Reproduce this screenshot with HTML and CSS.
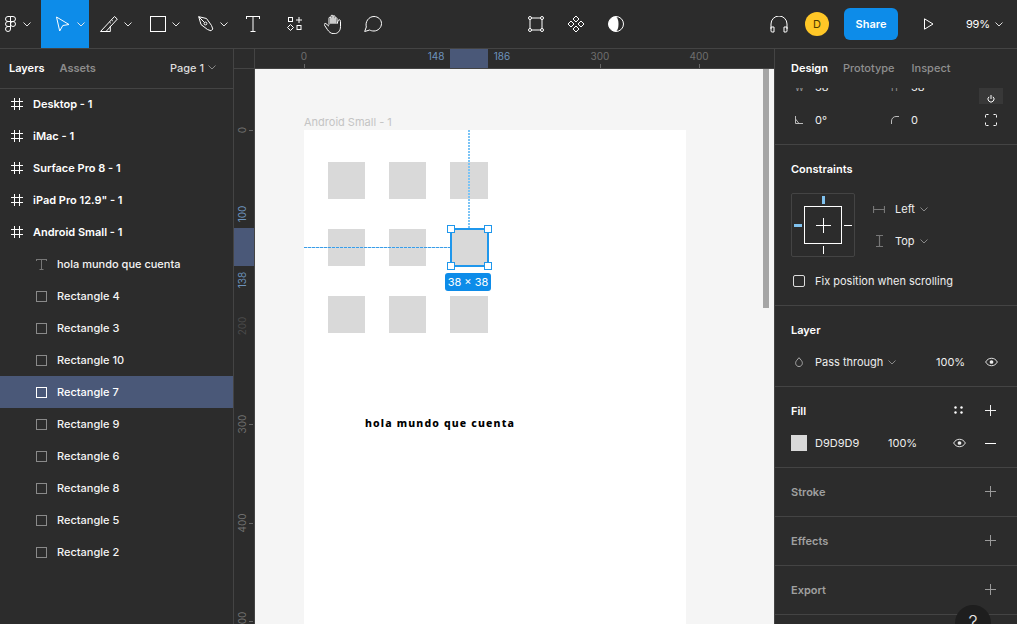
FILE: index.html
```html
<!DOCTYPE html>
<html lang="en">
<head>
<meta charset="utf-8">
<title>Figma</title>
<link rel="stylesheet" href="styles.css">
</head>
<body>
<svg class="sprite" aria-hidden="true">
  <symbol id="chev" viewBox="0 0 8 5"><path d="M.5.500 4 4 7.500.500" fill="none" stroke="currentColor"/></symbol>
  <symbol id="frame" viewBox="0 0 12 12"><path d="M3.500 0v12M8.500 0v12M0 3.500h12M0 8.500h12" fill="none" stroke="currentColor"/></symbol>
  <symbol id="rect" viewBox="0 0 11 11"><rect x=".5" y=".5" width="10" height="10" fill="none" stroke="currentColor"/></symbol>
  <symbol id="plus" viewBox="0 0 11 11"><path d="M5.500 0v11M0 5.500h11" fill="none" stroke="currentColor" vector-effect="non-scaling-stroke"/></symbol>
  <symbol id="eye" viewBox="0 0 14 10"><path d="M.7 5C2.200 2.300 4.400 1 7 1s4.800 1.300 6.300 4C11.800 7.700 9.600 9 7 9S2.200 7.700.7 5Z" fill="none" stroke="currentColor"/><circle cx="7" cy="5" r="2" fill="currentColor"/></symbol>
</svg>

<div class="app">
  <header class="topbar">
    <div class="tool tool-logo">
      <svg class="ico-logo" viewBox="0 0 11 16"><g fill="none" stroke="#fff"><path d="M5.500.5H3a2.500 2.500 0 0 0 0 5h2.500ZM5.500.5H8a2.500 2.500 0 0 1 0 5H5.500ZM5.500 5.500H3a2.500 2.500 0 0 0 0 5h2.500Z"/><circle cx="8" cy="8" r="2.500"/><path d="M3 10.500h2.500V13A2.500 2.500 0 1 1 3 10.500Z"/></g></svg>
      <svg class="chev"><use href="#chev"/></svg>
    </div>
    <div class="tool tool-active">
      <svg class="ico-16" viewBox="0 0 16 16"><path d="M1.500 1 14 8.500 7.800 9.500 4.700 15Z" fill="none" stroke="#fff"/></svg>
      <svg class="chev"><use href="#chev"/></svg>
    </div>
    <div class="tool tool-line">
      <svg class="ico-18" viewBox="0 0 18 16"><path d="M.5 15.500h9.800V9.800M.5 15.500 14.500.5l2.800 2.600L6 15.500M11.500 3.800l1.300 1.200M9.500 6l1.300 1.200" fill="none" stroke="#fff"/></svg>
      <svg class="chev"><use href="#chev"/></svg>
    </div>
    <div class="tool">
      <svg class="ico-16" viewBox="0 0 16 16"><rect x=".5" y=".5" width="15" height="15" fill="none" stroke="#fff"/></svg>
      <svg class="chev"><use href="#chev"/></svg>
    </div>
    <div class="tool">
      <svg class="ico-16" viewBox="0 0 16 16"><g fill="none" stroke="#fff"><path d="M.7.700 8.500 2.500 13.500 9.500 14.800 13 13 14.800 9.500 13.500 3 8.500Z"/><path d="M.7.700 6.500 6.500"/><circle cx="7.500" cy="7.500" r="1.400"/></g></svg>
      <svg class="chev"><use href="#chev"/></svg>
    </div>
    <div class="tool tool-t">
      <svg class="ico-t" viewBox="0 0 14 16"><path d="M0 .5h14M7 .5v15M4.500 15.500h5M.5 0v3M13.500 0v3" fill="none" stroke="#fff"/></svg>
    </div>
    <div class="tool tool-shapes">
      <svg class="ico-16" viewBox="0 0 16 16"><g fill="none" stroke="#fff"><rect x="1.500" y="1.500" width="4" height="4"/><path d="M12 1v6M9 4h6"/><path d="M3.500 8.500 6.500 11.500 3.500 14.500.5 11.500Z"/><rect x="10" y="9.500" width="4" height="4"/></g></svg>
    </div>
    <div class="tool tool-hand">
      <svg class="ico-hand" viewBox="0 0 18 20"><path d="M5.500 11V4.500a1 1 0 0 1 2 0V10 2.500a1 1 0 0 1 2 0V10 3a1 1 0 0 1 2 0v7-5a1 1 0 0 1 2 0v5c.5 0 .8-4 2-4 1 0 1.500.5 1.500 2v5c0 4-2.500 7-6.500 7-3.500 0-5-2-6.500-4L1 11.500c-.8-1 .3-2.300 1.500-1.500l3 2.500" fill="none" stroke="#fff" transform="translate(-.5 -.3)"/></svg>
    </div>
    <div class="tool tool-comment">
      <svg class="ico-18" viewBox="0 0 18 16"><path d="M.7 15.500 2.300 11C1 6 4.500.5 10 .5c4 0 7.500 3 7.500 7S14 15 10 15c-2 0-3.200-.4-4.300-1Z" fill="none" stroke="#fff"/></svg>
    </div>

    <div class="center-tools">
      <svg class="ico-16" viewBox="0 0 16 16"><g fill="none" stroke="#fff"><path d="M3 2h10M3 14h10M2 3v10M14 3v10"/><circle cx="2" cy="2" r="1.500"/><circle cx="14" cy="2" r="1.500"/><circle cx="2" cy="14" r="1.500"/><circle cx="14" cy="14" r="1.500"/></g></svg>
      <svg class="ico-18" viewBox="0 0 18 18"><g fill="none" stroke="#fff"><path d="M9 1 12 4 9 7 6 4Z"/><path d="M4 6 7 9 4 12 1 9Z"/><path d="M14 6 17 9 14 12 11 9Z"/><path d="M9 11 12 14 9 17 6 14Z"/></g></svg>
      <svg class="ico-16" viewBox="0 0 16 16"><circle cx="8" cy="8" r="7.500" fill="none" stroke="#fff"/><path d="M8 .5a7.500 7.500 0 0 0 0 15c2-2 2.500-4.500 2.500-7.500S10 2.500 8 .5Z" fill="#fff"/></svg>
    </div>

    <div class="right-tools">
      <svg class="ico-head" viewBox="0 0 18 17"><path d="M1 13V8a8 8 0 0 1 16 0v5M1 11h3v5H2a1 1 0 0 1-1-1ZM17 11h-3v5h2a1 1 0 0 0 1-1Z" fill="none" stroke="#fff"/></svg>
      <div class="avatar">D</div>
      <div class="share">Share</div>
      <svg class="ico-play" viewBox="0 0 10 12"><path d="M.5.800 9 6 .5 11.200Z" fill="none" stroke="#fff"/></svg>
      <div class="zoom-level">99%<svg class="chev chev-zoom"><use href="#chev"/></svg></div>
    </div>
  </header>

  <div class="main">
    <aside class="layers">
      <div class="layers-head">
        <span class="tab-on">Layers</span>
        <span class="tab-off">Assets</span>
        <span class="page">Page 1<svg class="chev chev-dim"><use href="#chev"/></svg></span>
      </div>
      <ul class="layer-list">
        <li class="row row-frame"><svg class="ico-frame"><use href="#frame"/></svg>Desktop - 1</li>
        <li class="row row-frame"><svg class="ico-frame"><use href="#frame"/></svg>iMac - 1</li>
        <li class="row row-frame"><svg class="ico-frame"><use href="#frame"/></svg>Surface Pro 8 - 1</li>
        <li class="row row-frame"><svg class="ico-frame"><use href="#frame"/></svg>iPad Pro 12.9" - 1</li>
        <li class="row row-frame"><svg class="ico-frame"><use href="#frame"/></svg>Android Small - 1</li>
        <li class="row row-child"><svg class="ico-rect ico-text" viewBox="0 0 11 11"><path d="M0 .5h11M5.500.5v10M3.500 10.500h4M.5 0v2M10.500 0v2" fill="none" stroke="currentColor"/></svg>hola mundo que cuenta</li>
        <li class="row row-child"><svg class="ico-rect"><use href="#rect"/></svg>Rectangle 4</li>
        <li class="row row-child"><svg class="ico-rect"><use href="#rect"/></svg>Rectangle 3</li>
        <li class="row row-child"><svg class="ico-rect"><use href="#rect"/></svg>Rectangle 10</li>
        <li class="row row-child row-selected"><svg class="ico-rect"><use href="#rect"/></svg>Rectangle 7</li>
        <li class="row row-child"><svg class="ico-rect"><use href="#rect"/></svg>Rectangle 9</li>
        <li class="row row-child"><svg class="ico-rect"><use href="#rect"/></svg>Rectangle 6</li>
        <li class="row row-child"><svg class="ico-rect"><use href="#rect"/></svg>Rectangle 8</li>
        <li class="row row-child"><svg class="ico-rect"><use href="#rect"/></svg>Rectangle 5</li>
        <li class="row row-child"><svg class="ico-rect"><use href="#rect"/></svg>Rectangle 2</li>
      </ul>
    </aside>

    <section class="stage">
      <div class="hruler-row">
        <div class="corner"></div>
        <div class="hruler">
          <span class="hl-h"></span>
          <span class="rn rn-h x0">0</span><i class="tick-h tx0"></i>
          <span class="rn rn-h rn-blue x148">148</span>
          <span class="rn rn-h rn-blue x186">186</span>
          <span class="rn rn-h x300">300</span><i class="tick-h tx300"></i>
          <span class="rn rn-h x400">400</span><i class="tick-h tx400"></i>
        </div>
      </div>
      <div class="stage-body">
        <div class="vruler">
          <span class="hl-v"></span>
          <span class="rn rn-v y0">0</span><i class="tick-v ty0"></i>
          <span class="rn rn-v rn-blue y100">100</span>
          <span class="rn rn-v rn-blue y138">138</span>
          <span class="rn rn-v rn-faint y200">200</span>
          <span class="rn rn-v y300">300</span><i class="tick-v ty300"></i>
          <span class="rn rn-v y400">400</span><i class="tick-v ty400"></i>
          <span class="rn rn-v y500">500</span><i class="tick-v ty500"></i>
        </div>
        <div class="canvas">
          <div class="frame-label">Android Small - 1</div>
          <div class="art-frame">
            <div class="grid">
              <div class="cell"></div><div class="cell"></div><div class="cell"></div>
              <div class="cell"></div><div class="cell"></div><div class="cell"></div>
              <div class="cell"></div><div class="cell"></div><div class="cell"></div>
            </div>
            <div class="art-text">hola mundo que cuenta</div>
            <div class="guide-v"></div>
            <div class="guide-h"></div>
            <div class="selection">
              <i class="handle h-tl"></i><i class="handle h-tr"></i><i class="handle h-bl"></i><i class="handle h-br"></i>
            </div>
            <div class="size-tag">38 × 38</div>
          </div>
          <div class="scrollbar"></div>
        </div>
      </div>
    </section>

    <aside class="props">
      <div class="props-tabs">
        <span class="ptab-on">Design</span>
        <span class="ptab-off">Prototype</span>
        <span class="ptab-off">Inspect</span>
      </div>
      <section class="sec sec-geo">
        <div class="clip-row">
          <div class="geo-row geo-row-clipped">
            <span class="geo-ico">W</span><span class="geo-val">38</span>
            <span class="geo-ico geo-col2">H</span><span class="geo-val">38</span>
            <span class="power"><svg class="ico-power" viewBox="0 0 8 8"><path d="M2 1.800a3 3 0 1 0 4 0M4 0v4" fill="none" stroke="#fff"/></svg></span>
          </div>
        </div>
        <div class="geo-row">
          <svg class="geo-svg" viewBox="0 0 8 8"><path d="M.5 0v7.500H8M.5 3 4 7.500" fill="none" stroke="#bbb"/></svg><span class="geo-val">0°</span>
          <svg class="geo-svg geo-col2" viewBox="0 0 8 8"><path d="M.5 8V5A4.500 4.500 0 0 1 5 .5h3" fill="none" stroke="#bbb"/></svg><span class="geo-val">0</span>
          <svg class="ico-corners" viewBox="0 0 12 12"><path d="M.5 3.500v-2a1 1 0 0 1 1-1h2M8.500.5h2a1 1 0 0 1 1 1v2M11.500 8.500v2a1 1 0 0 1-1 1h-2M3.500 11.500h-2a1 1 0 0 1-1-1v-2" fill="none" stroke="#fff"/></svg>
        </div>
      </section>

      <section class="sec sec-constraints">
        <h3 class="sec-title">Constraints</h3>
        <div class="constraint-body">
          <div class="cwidget">
            <div class="cbox"><svg class="cplus"><use href="#plus"/></svg></div>
            <i class="cm cm-top"></i><i class="cm cm-left"></i><i class="cm cm-right"></i><i class="cm cm-bottom"></i>
          </div>
          <div class="cselects">
            <div class="csel"><svg class="csel-ico" viewBox="0 0 12 7"><path d="M.5 0v7M11.500 0v7M.5 3.500h11" fill="none" stroke="#777" stroke-width="1.200"/></svg>Left<svg class="chev chev-dim"><use href="#chev"/></svg></div>
            <div class="csel"><svg class="csel-ico csel-ico-v" viewBox="0 0 7 12"><path d="M0 .5h7M0 11.500h7M3.500.5v11" fill="none" stroke="#777" stroke-width="1.200"/></svg>Top<svg class="chev chev-dim"><use href="#chev"/></svg></div>
          </div>
        </div>
        <label class="fix-row"><span class="checkbox"></span>Fix position when scrolling</label>
      </section>

      <section class="sec sec-layer">
        <h3 class="sec-title">Layer</h3>
        <div class="prop-row">
          <svg class="ico-drop" viewBox="0 0 8 10"><path d="M4 .7 6.300 3.400C8.600 6.200 6.800 9.500 4 9.500S-.6 6.200 1.700 3.400Z" fill="none" stroke="#aaa"/></svg>
          <span class="blend">Pass through<svg class="chev chev-dim"><use href="#chev"/></svg></span>
          <span class="pct-layer">100%</span>
          <svg class="ico-eye"><use href="#eye"/></svg>
        </div>
      </section>

      <section class="sec sec-fill">
        <div class="sec-head">
          <h3 class="sec-title">Fill</h3>
          <svg class="ico-dots" viewBox="0 0 9 8"><g fill="#fff"><circle cx="1.500" cy="1.500" r="1.200"/><circle cx="7.500" cy="1.500" r="1.200"/><circle cx="1.500" cy="6.500" r="1.200"/><circle cx="7.500" cy="6.500" r="1.200"/></g></svg>
          <svg class="ico-plus"><use href="#plus"/></svg>
        </div>
        <div class="prop-row prop-row-fill">
          <span class="swatch"></span>
          <span class="hex">D9D9D9</span>
          <span class="pct-fill">100%</span>
          <svg class="ico-eye"><use href="#eye"/></svg>
          <svg class="ico-minus" viewBox="0 0 11 1"><path d="M0 .5h11" stroke="#fff"/></svg>
        </div>
      </section>

      <section class="sec sec-empty"><h3 class="sec-title sec-title-dim">Stroke</h3><svg class="ico-plus ico-plus-dim"><use href="#plus"/></svg></section>
      <section class="sec sec-empty"><h3 class="sec-title sec-title-dim">Effects</h3><svg class="ico-plus ico-plus-dim"><use href="#plus"/></svg></section>
      <section class="sec sec-empty"><h3 class="sec-title sec-title-dim">Export</h3><svg class="ico-plus ico-plus-dim"><use href="#plus"/></svg></section>
      <div class="help"><span>?</span></div>
    </aside>
  </div>
</div>
</body>
</html>
```

FILE: styles.css
```css
* { box-sizing: border-box; }
html, body { margin: 0; height: 100%; overflow: hidden; }
body { background: #2c2c2c; color: #fff; font-family: Inter, "Liberation Sans", sans-serif; font-size: 11px; }
svg { display: block; flex: none; }
.sprite { position: absolute; width: 0; height: 0; }
.app { width: 1017px; height: 624px; display: flex; flex-direction: column; overflow: hidden; }

/* top bar */
.topbar { height: 49px; flex: none; display: flex; align-items: center; background: #2c2c2c; border-bottom: 1px solid #444; }
.tool { height: 48px; width: 48px; padding-left: 13px; display: flex; align-items: center; gap: 6px; color: #fff; }
.tool-logo { width: 41px; padding-left: 5px; gap: 7px; }
.tool-active { background: #0d8ce9; padding-left: 14px; gap: 6px; }
.tool-line { padding-left: 11px; }
.tool-t { width: 42px; }
.tool-shapes { width: 37px; padding-left: 12px; }
.tool-hand { width: 40px; padding-left: 12px; }
.tool-comment { width: 30px; padding-left: 12px; }
.chev { width: 8px; height: 5px; color: #e6e6e6; }
.chev-dim { color: #888; }
.ico-logo { width: 11px; height: 16px; }
.ico-16 { width: 16px; height: 16px; }
.ico-18 { width: 18px; height: 16px; }
.ico-t { width: 14px; height: 16px; }
.ico-hand { width: 18px; height: 20px; }
.center-tools { margin-left: 146px; display: flex; align-items: center; gap: 23px; }
.center-tools .ico-18 { height: 18px; }
.right-tools { margin-left: auto; display: flex; align-items: center; }
.ico-head { width: 18px; height: 17px; margin-right: 17px; }
.avatar { width: 24px; height: 24px; border-radius: 50%; background: #ffc727; color: #4d3c00; font-size: 11px; display: flex; align-items: center; justify-content: center; margin-right: 15px; }
.share { width: 54px; height: 32px; border-radius: 6px; background: #0d8ce9; font-weight: 600; display: flex; align-items: center; justify-content: center; margin-right: 26px; }
.ico-play { width: 10px; height: 12px; margin-right: 32px; }
.zoom-level { display: flex; align-items: center; gap: 5px; width: 51px; letter-spacing: -.2px; }
.chev-zoom { color: #ddd; }

/* main columns */
.main { flex: 1; display: flex; min-height: 0; position: relative; }

/* layers */
.layers { width: 234px; flex: none; border-right: 1px solid #444; }
.layers-head { height: 40px; display: flex; align-items: center; padding: 0 16px 2px 9px; border-bottom: 1px solid #444; font-weight: 600; }
.tab-on { color: #fff; }
.tab-off { color: #8d8d8d; margin-left: 15px; }
.page { margin-left: auto; margin-right: 1px; display: flex; align-items: center; gap: 4px; color: #ddd; font-weight: 500; }
.layer-list { list-style: none; margin: -1px 0 0; padding: 0; }
.row { height: 32px; display: flex; align-items: center; color: #fff; }
.row-frame { padding-left: 11px; font-weight: 600; }
.row-child { padding-left: 36px; font-weight: 500; color: #f4f4f4; }
.row-selected { background: #4a5878; color: #fff; }
.ico-frame { width: 12px; height: 12px; margin-right: 10px; color: #fff; }
.ico-rect { width: 11px; height: 11px; margin-right: 10px; color: #8a8a8a; }
.row-selected .ico-rect { color: #fff; }
.ico-text { color: #777; }

/* stage */
.stage { flex: 1; min-width: 0; display: flex; flex-direction: column; }
.hruler-row { height: 20px; flex: none; display: flex; border-bottom: 1px solid #444; }
.corner { width: 21px; flex: none; border-right: 1px solid #444; }
.hruler { flex: 1; position: relative; }
.stage-body { flex: 1; display: flex; min-height: 0; }
.vruler { width: 21px; flex: none; position: relative; border-right: 1px solid #444; }
.rn { position: absolute; font-size: 10px; line-height: 12px; color: #6f6f6f; white-space: nowrap; }
.rn-blue { color: #6d93bd; }
.rn-faint { color: #4a4a4a; }
.rn-h { top: 1px; transform: translateX(-50%); }
.x0 { left: 49px; }
.x148 { left: 181px; }
.x186 { left: 247px; }
.x300 { left: 345px; }
.x400 { left: 444px; }
.tick-h { position: absolute; top: 15px; width: 1px; height: 4px; background: #666; }
.tx0 { left: 49px; } .tx300 { left: 345px; } .tx400 { left: 444px; }
.hl-h { position: absolute; left: 195px; top: 0; width: 38px; height: 19px; background: #4a5878; }
.rn-v { left: 2px; width: 12px; text-align: center; writing-mode: vertical-rl; transform: rotate(180deg) translateY(50%); }
.y0 { top: 61px; }
.y100 { top: 145px; }
.y138 { top: 211px; }
.y200 { top: 257px; }
.y300 { top: 355px; }
.y400 { top: 454px; }
.y500 { top: 552px; }
.tick-v { position: absolute; left: 15px; width: 4px; height: 1px; background: #666; }
.ty0 { top: 61px; } .ty300 { top: 355px; } .ty400 { top: 454px; } .ty500 { top: 552px; }
.hl-v { position: absolute; left: 0; top: 159px; width: 20px; height: 38px; background: #4a5878; }

/* canvas */
.canvas { flex: 1; position: relative; background: #f5f5f5; overflow: hidden; }
.frame-label { position: absolute; left: 49px; top: 46px; color: #c4c4c4; font-size: 11px; line-height: 14px; }
.art-frame { position: absolute; left: 49px; top: 61px; width: 382px; height: 600px; background: #fff; }
.grid { position: absolute; left: 24px; top: 32px; display: grid; grid-template-columns: 37px 37px 38px; grid-auto-rows: 37px; column-gap: 24px; row-gap: 30px; }
.cell { background: #d9d9d9; }
.art-text { position: absolute; left: 61px; top: 285px; font-family: "Noto Sans", sans-serif; font-size: 10.5px; font-weight: 800; line-height: 16px; letter-spacing: 1.16px; color: #000; white-space: nowrap; }
.guide-v { position: absolute; left: 164px; top: 0; width: 2px; height: 98px; background: repeating-linear-gradient(to bottom, #7cc4f5 0 2px, transparent 2px 3px); }
.guide-h { position: absolute; left: 0; top: 117px; width: 146px; height: 1px; background: repeating-linear-gradient(to right, #3a9de8 0 3px, #b9dcf6 3px 4px); }
.selection { position: absolute; left: 146px; top: 98px; width: 39px; height: 39px; border: 2px solid #1f97ec; background: #d9d9d9; }
.handle { position: absolute; width: 8px; height: 8px; background: #fff; border: 1px solid #1f97ec; }
.h-tl { left: -5px; top: -5px; } .h-tr { right: -5px; top: -5px; }
.h-bl { left: -5px; bottom: -5px; } .h-br { right: -5px; bottom: -5px; }
.size-tag { position: absolute; left: 141px; top: 143px; width: 46px; height: 18px; border-radius: 3px; background: #0d8ce9; color: #fff; font-size: 11px; line-height: 18px; text-align: center; }
.scrollbar { position: absolute; left: 508px; top: 0; width: 6px; height: 239px; background: #a5a5a5; }

/* properties */
.props { width: 243px; flex: none; position: relative; border-left: 1px solid #444; margin-left: -1px; background: #2c2c2c; overflow: hidden; }
.props-tabs { height: 39px; display: flex; align-items: center; gap: 15px; padding: 0 0 2px 16px; font-weight: 600; }
.ptab-on { color: #fff; }
.ptab-off { color: #8f8f8f; font-weight: 500; }
.ptab-off + .ptab-off { margin-left: 2px; }
.sec { border-bottom: 1px solid #444; padding-left: 16px; position: relative; }
.sec-geo { height: 57px; }
.clip-row { height: 16px; overflow: hidden; }
.geo-row { height: 32px; display: flex; align-items: center; position: relative; }
.geo-row-clipped { margin-top: -17px; }
.geo-ico { width: 8px; margin-left: 4px; font-size: 9px; color: #999; }
.geo-svg { width: 8px; height: 8px; margin-left: 4px; }
.geo-val { margin-left: 12px; width: 76px; color: #eee; }
.geo-col2 { margin-left: 0; }
.power { position: absolute; left: 188px; top: 12px; width: 24px; height: 24px; background: #383838; display: flex; align-items: center; justify-content: center; padding-top: 7px; }
.ico-power { width: 8px; height: 8px; }
.ico-corners { position: absolute; left: 194px; top: 10px; width: 12px; height: 12px; }
.sec-constraints { height: 161px; }
.sec-title { margin: 0; padding-top: 16px; font-size: 11px; line-height: 16px; font-weight: 600; color: #fff; }
.constraint-body { margin-top: 16px; display: flex; }
.cwidget { width: 64px; height: 64px; border: 1px solid #444; border-radius: 2px; position: relative; display: flex; align-items: center; justify-content: center; }
.cbox { width: 38px; height: 38px; border: 1px solid #fff; display: flex; align-items: center; justify-content: center; }
.cplus { width: 15px; height: 15px; color: #fff; }
.cm { position: absolute; background: #fff; }
.cm-top { left: 30px; top: 2px; width: 3px; height: 8px; background: #7fc1ee; }
.cm-left { left: 2px; top: 30px; width: 8px; height: 3px; background: #7fc1ee; }
.cm-right { left: 52px; top: 31px; width: 8px; height: 1px; }
.cm-bottom { left: 31px; top: 52px; width: 1px; height: 8px; }
.cselects { margin-left: 18px; display: flex; flex-direction: column; gap: 16px; padding-top: 8px; }
.csel { height: 16px; display: flex; align-items: center; color: #eee; }
.csel .chev { margin-left: 5px; }
.csel-ico { width: 12px; height: 7px; margin-right: 10px; }
.csel-ico-v { width: 7px; height: 12px; margin: 0 12px 0 3px; }
.fix-row { display: flex; align-items: center; margin-top: 16px; padding-left: 2px; color: #eee; height: 16px; }
.checkbox { width: 12px; height: 12px; border: 1px solid #ddd; border-radius: 2px; margin-right: 10px; }
.sec-layer { height: 81px; }
.prop-row { display: flex; align-items: center; height: 16px; margin-top: 16px; position: relative; }
.ico-drop { width: 8px; height: 10px; margin-left: 4px; margin-right: 12px; }
.blend { display: flex; align-items: center; gap: 5px; width: 121px; color: #eee; }
.pct-layer { width: 49px; color: #eee; }
.ico-eye { width: 13px; height: 10px; color: #eee; }
.sec-fill { height: 81px; }
.sec-head { display: flex; align-items: flex-start; position: relative; height: 32px; }
.ico-dots { position: absolute; left: 163px; top: 19px; width: 9px; height: 8px; }
.ico-plus { position: absolute; left: 194px; top: 18px; width: 11px; height: 11px; color: #eee; }
.sec-empty > .ico-plus { left: 210px; }
.ico-plus-dim { color: #9a9a9a; }
.prop-row-fill { margin-top: 16px; }
.swatch { width: 16px; height: 16px; background: #d9d9d9; margin-right: 8px; }
.hex { width: 73px; color: #eee; }
.pct-fill { width: 65px; color: #eee; }
.ico-minus { width: 11px; height: 1px; margin-left: 19px; }
.sec-empty { height: 49px; }
.sec-title-dim { color: #a0a0a0; }
.help { position: absolute; left: 180px; top: 556px; width: 36px; height: 36px; border-radius: 50%; background: #1e1e1e; display: flex; justify-content: center; padding-top: 7px; font-size: 18px; font-weight: 300; line-height: 22px; color: #e6e6e6; }
```
